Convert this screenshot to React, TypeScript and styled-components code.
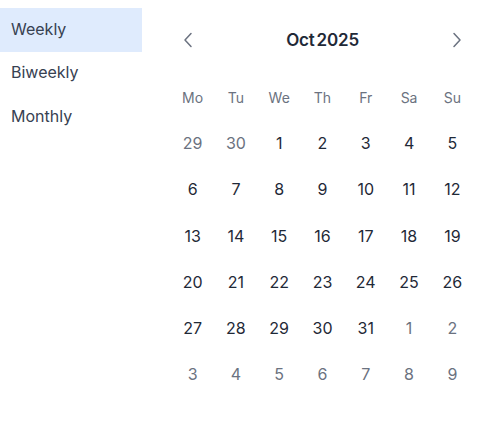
import React, { useState } from 'react';
import styled, { createGlobalStyle } from 'styled-components';

const GlobalStyle = createGlobalStyle`
    body {
        margin: 0;
        background: #ffffff;
        font-family: Inter, 'Noto Sans', sans-serif;
    }
`;

const Layout = styled.div`
    display: flex;
    align-items: flex-start;
`;

const Sidebar = styled.nav`
    width: 142px;
    padding-top: 8px;
    display: flex;
    flex-direction: column;
`;

const PresetItem = styled.button<{ $active?: boolean }>`
    height: 43.5px;
    padding: 0 11px 2px;
    border: none;
    text-align: left;
    font-family: inherit;
    font-size: 16px;
    color: #374151;
    background: ${(p) => (p.$active ? '#dfebfd' : 'transparent')};
    cursor: pointer;
`;

const Calendar = styled.section`
    margin-left: 29px;
    padding-top: 20px;
    width: 303px;
`;

const Header = styled.div`
    height: 40px;
    display: flex;
    align-items: center;
    justify-content: space-between;
    padding: 0 12px;
`;

const NavButton = styled.button`
    border: none;
    background: none;
    padding: 0;
    width: 10px;
    height: 16px;
    display: flex;
    align-items: center;
    justify-content: center;
    color: #6b7280;
    cursor: pointer;
`;

const Title = styled.div`
    font-size: 17px;
    font-weight: 600;
    color: #1f2937;
    letter-spacing: -0.2px;
    word-spacing: -2px;
`;

const Grid = styled.div`
    margin-top: 14px;
    display: grid;
    grid-template-columns: repeat(7, 1fr);
    grid-auto-rows: 46.2px;
`;

const WeekDay = styled.div`
    display: flex;
    align-items: center;
    justify-content: center;
    font-size: 14px;
    color: #6b7280;
`;

const Day = styled.div<{ $outside?: boolean }>`
    display: flex;
    align-items: center;
    justify-content: center;
    font-size: 16px;
    color: ${(p) => (p.$outside ? '#6b7280' : '#1f2937')};
`;

const Chevron = ({ dir }: { dir: 'left' | 'right' }) => (
    <svg width="10" height="16" viewBox="0 0 10 16" fill="none">
        <path
            d={dir === 'left' ? 'M8 1.5 L2 8 L8 14.5' : 'M2 1.5 L8 8 L2 14.5'}
            stroke="currentColor"
            strokeWidth="1.5"
            strokeLinecap="round"
            strokeLinejoin="round"
        />
    </svg>
);

const WEEKDAYS = ['Mo', 'Tu', 'We', 'Th', 'Fr', 'Sa', 'Su'];

// Oct 2025 starts on a Wednesday; show 6 full weeks
const buildDays = () => {
    const days: { label: number; outside: boolean }[] = [];
    days.push({ label: 29, outside: true }, { label: 30, outside: true });
    for (let d = 1; d <= 31; d++) days.push({ label: d, outside: false });
    let next = 1;
    while (days.length < 42) days.push({ label: next++, outside: true });
    return days;
};

export default function App() {
    const [preset, setPreset] = useState('Weekly');
    const days = buildDays();

    return (
        <>
            <GlobalStyle />
            <Layout>
                <Sidebar>
                    {['Weekly', 'Biweekly', 'Monthly'].map((name) => (
                        <PresetItem key={name} $active={preset === name} onClick={() => setPreset(name)}>
                            {name}
                        </PresetItem>
                    ))}
                </Sidebar>
                <Calendar>
                    <Header>
                        <NavButton aria-label="Previous month">
                            <Chevron dir="left" />
                        </NavButton>
                        <Title>Oct 2025</Title>
                        <NavButton aria-label="Next month">
                            <Chevron dir="right" />
                        </NavButton>
                    </Header>
                    <Grid>
                        {WEEKDAYS.map((w) => (
                            <WeekDay key={w}>{w}</WeekDay>
                        ))}
                        {days.map((d, i) => (
                            <Day key={i} $outside={d.outside}>
                                {d.label}
                            </Day>
                        ))}
                    </Grid>
                </Calendar>
            </Layout>
        </>
    );
}
